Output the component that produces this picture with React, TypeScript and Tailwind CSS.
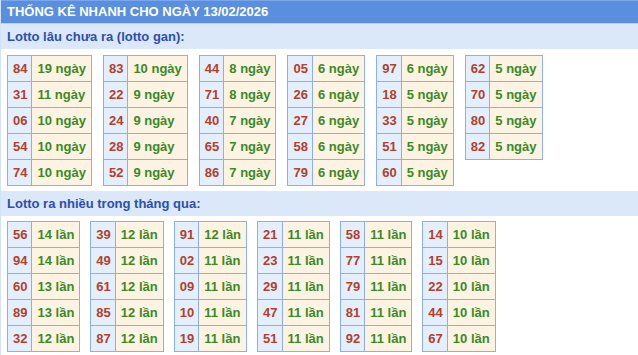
const ganTables: [string, number][][] = [
  [["84", 19], ["31", 11], ["06", 10], ["54", 10], ["74", 10]],
  [["83", 10], ["22", 9], ["24", 9], ["28", 9], ["52", 9]],
  [["44", 8], ["71", 8], ["40", 7], ["65", 7], ["86", 7]],
  [["05", 6], ["26", 6], ["27", 6], ["58", 6], ["79", 6]],
  [["97", 6], ["18", 5], ["33", 5], ["51", 5], ["60", 5]],
  [["62", 5], ["70", 5], ["80", 5], ["82", 5]],
];

const nhieuTables: [string, number][][] = [
  [["56", 14], ["94", 14], ["60", 13], ["89", 13], ["32", 12]],
  [["39", 12], ["49", 12], ["61", 12], ["85", 12], ["87", 12]],
  [["91", 12], ["02", 11], ["09", 11], ["10", 11], ["19", 11]],
  [["21", 11], ["23", 11], ["29", 11], ["47", 11], ["51", 11]],
  [["58", 11], ["77", 11], ["79", 11], ["81", 11], ["92", 11]],
  [["14", 10], ["15", 10], ["22", 10], ["44", 10], ["67", 10]],
];

const LottoTable = ({ rows, unit }: { rows: [string, number][]; unit: string }) => (
  <table className="border-collapse">
    <tbody>
      {rows.map(([num, count]) => (
        <tr key={num}>
          <td className="border border-[#8eaef0] bg-[#e4effd] text-[#b3402a] text-center pl-[5px] pr-[4px] py-[5px] leading-[15px]">
            {num}
          </td>
          <td className="border border-[#8eaef0] bg-[#fdf3e3] text-[#3b8a26] text-left px-[5px] py-[5px] leading-[15px] whitespace-nowrap">
            {count} {unit}
          </td>
        </tr>
      ))}
    </tbody>
  </table>
);

const SectionTitle = ({ children }: { children: React.ReactNode }) => (
  <div className="h-[25px] bg-[#dbe8f9] text-[#2c4fb0] px-[6px] flex items-center">
    {children}
  </div>
);

export default function App() {
  return (
    <div
      className="w-full bg-white border-l border-[#d3e2f6] text-[13px] font-bold"
      style={{ fontFamily: '"Liberation Sans", Arial, sans-serif' }}
    >
      {/* top bar */}
      <div className="h-[24px] bg-[#5a8fe0] border-t border-[#7aa6ea] border-b border-b-[#c5cedb] text-white px-[6px] flex items-center">
        THỐNG KÊ NHANH CHO NGÀY 13/02/2026
      </div>

      <SectionTitle>Lotto lâu chưa ra (lotto gan):</SectionTitle>
      <div className="flex items-start gap-[11px] px-[6px] pt-[6px] pb-[5px]">
        {ganTables.map((rows, i) => (
          <LottoTable key={i} rows={rows} unit="ngày" />
        ))}
      </div>

      <SectionTitle>Lotto ra nhiều trong tháng qua:</SectionTitle>
      <div className="flex items-start gap-[10px] px-[6px] pt-[5px] pb-[6px]">
        {nhieuTables.map((rows, i) => (
          <LottoTable key={i} rows={rows} unit="lần" />
        ))}
      </div>
    </div>
  );
}
